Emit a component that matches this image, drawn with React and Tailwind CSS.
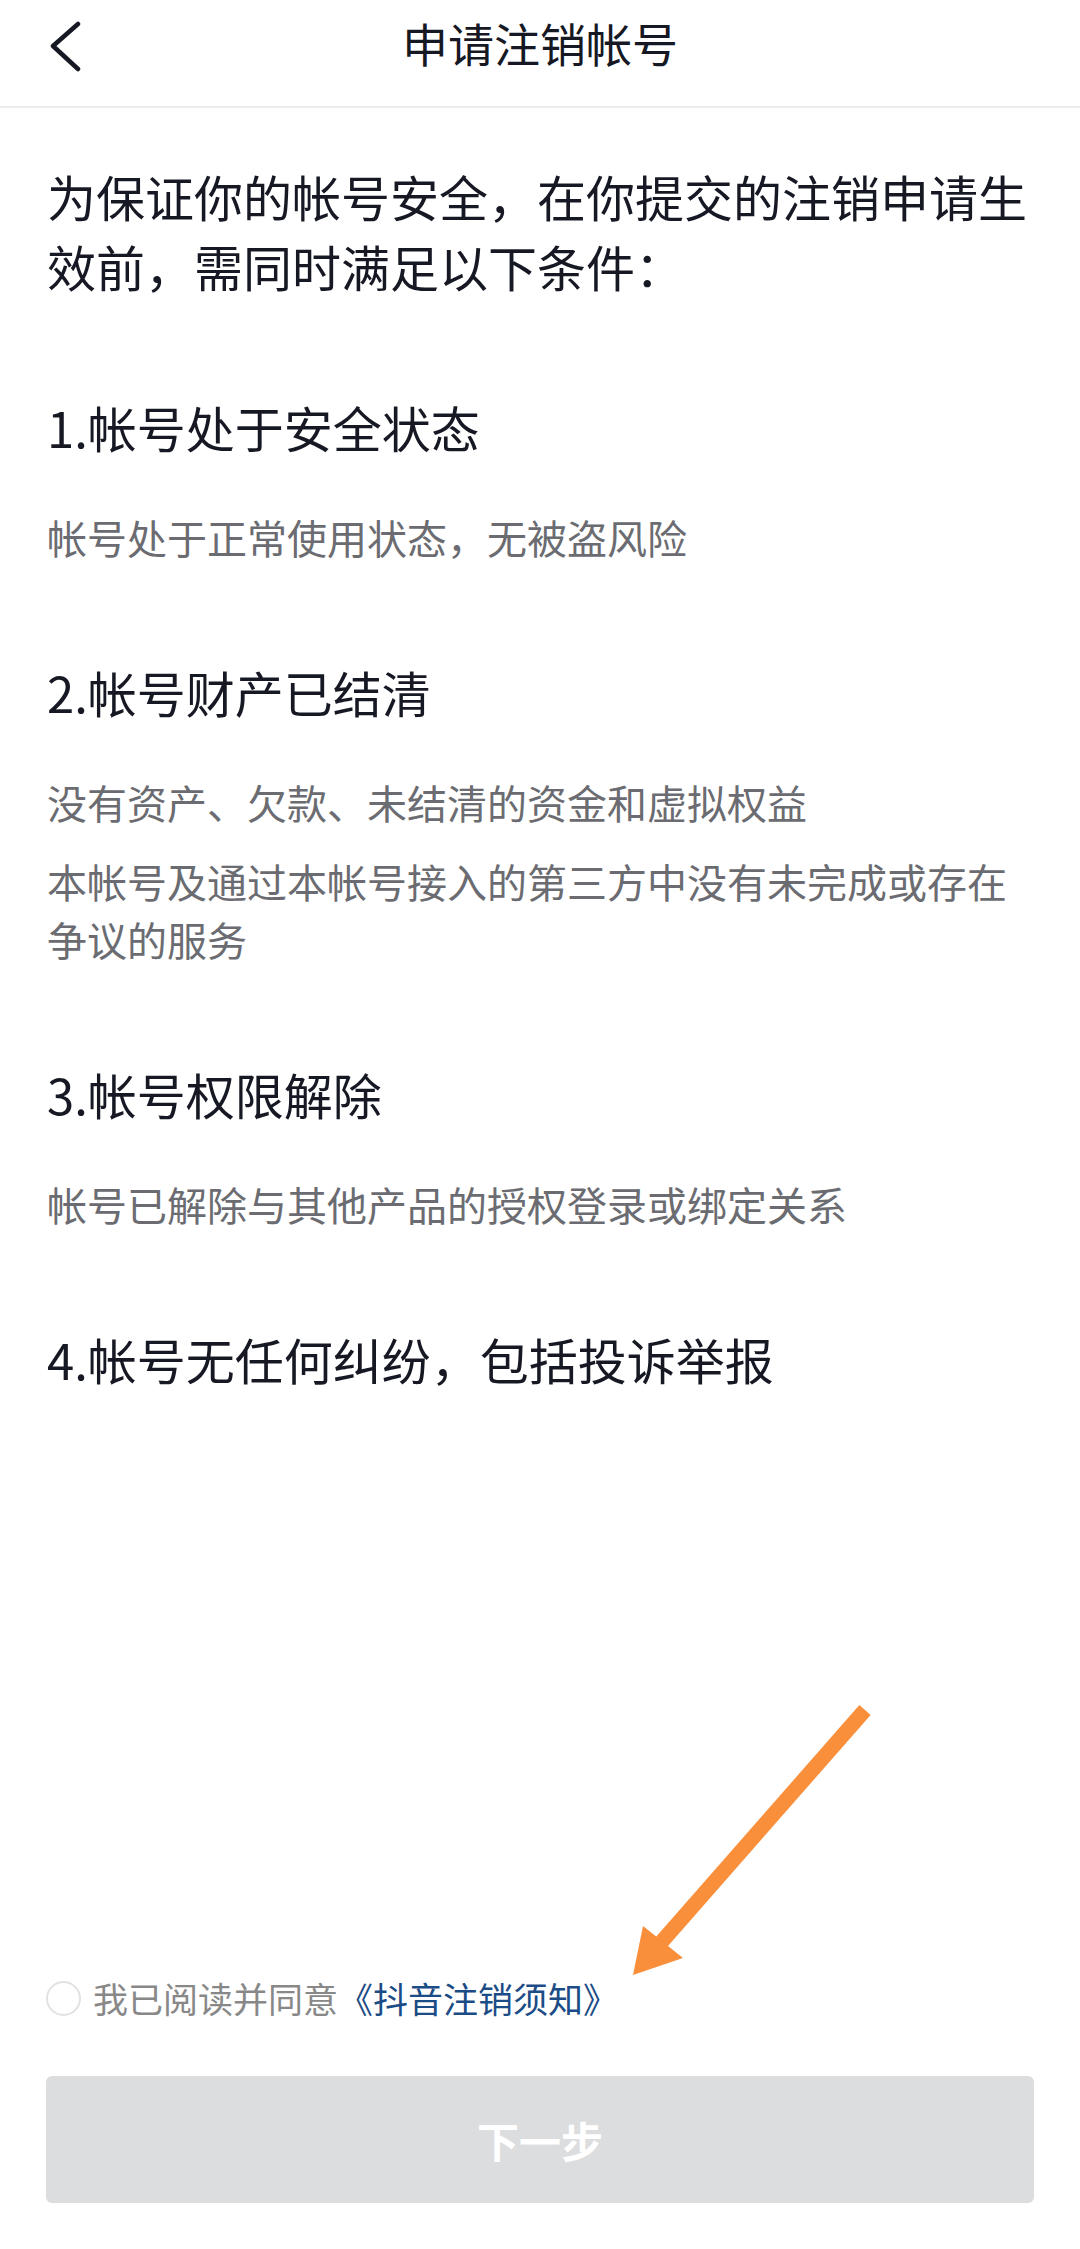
const sections = [
  {
    title: "1.帐号处于安全状态",
    lines: ["帐号处于正常使用状态，无被盗风险"],
  },
  {
    title: "2.帐号财产已结清",
    lines: [
      "没有资产、欠款、未结清的资金和虚拟权益",
      "本帐号及通过本帐号接入的第三方中没有未完成或存在争议的服务",
    ],
  },
  {
    title: "3.帐号权限解除",
    lines: ["帐号已解除与其他产品的授权登录或绑定关系"],
  },
  {
    title: "4.帐号无任何纠纷，包括投诉举报",
    lines: [],
  },
];

function BackIcon() {
  return (
    <svg width="40" height="60" viewBox="0 0 40 60" fill="none">
      <polyline
        points="34,12 9,34 34,57"
        stroke="#161823"
        strokeWidth="4.5"
        strokeLinecap="round"
        strokeLinejoin="round"
      />
    </svg>
  );
}

function Arrow() {
  return (
    <svg
      className="absolute left-[600px] top-[1690px] pointer-events-none"
      width="300"
      height="300"
      viewBox="0 0 300 300"
    >
      <line x1="265" y1="20" x2="58" y2="256" stroke="#f98e3b" strokeWidth="15" />
      <polygon points="33,285 43,236 83,268" fill="#f98e3b" />
    </svg>
  );
}

export default function App() {
  return (
    <div className="relative min-h-screen flex flex-col bg-white font-['Noto_Sans_CJK_SC','Noto_Sans',sans-serif] text-[#161823]">
      {/* nav bar */}
      <header className="h-[108px] pb-[22px] grid grid-cols-[1fr_auto_1fr] items-center border-b-2 border-[#ececec]">
        <button className="pl-[44px] flex items-center" aria-label="back">
          <BackIcon />
        </button>
        <h1 className="text-[46px] leading-[46px] font-normal">申请注销帐号</h1>
        <div />
      </header>

      <main className="px-[47px] pt-[53px]">
        <p className="text-[49px] leading-[70px]">
          为保证你的帐号安全，在你提交的注销申请生效前，需同时满足以下条件：
        </p>
        {sections.map((s) => (
          <section key={s.title} className="mt-[93px]">
            <h2 className="text-[49px] leading-[66px] font-normal">{s.title}</h2>
            {s.lines.map((line, i) => (
              <p
                key={i}
                className={`text-[40px] leading-[58px] text-[#6b6c71] ${i === 0 ? "mt-[48px]" : "mt-[21px]"}`}
              >
                {line}
              </p>
            ))}
          </section>
        ))}
      </main>

      <div className="flex-1" />

      <footer className="px-[46px] pb-[46px]">
        <label className="h-[40px] flex items-center gap-[12px]">
          <span className="w-[35px] h-[35px] rounded-full border-2 border-[#e2e2e2] shrink-0" />
          <span className="text-[35px] leading-[40px] text-[#888888]">
            我已阅读并同意<span className="text-[#1b4c86]">《抖音注销须知》</span>
          </span>
        </label>
        <button className="mt-[58px] w-full h-[127px] rounded-[6px] bg-[#dcdddf] text-white text-[42px] font-bold flex items-center justify-center">
          下一步
        </button>
      </footer>

      <Arrow />
    </div>
  );
}
